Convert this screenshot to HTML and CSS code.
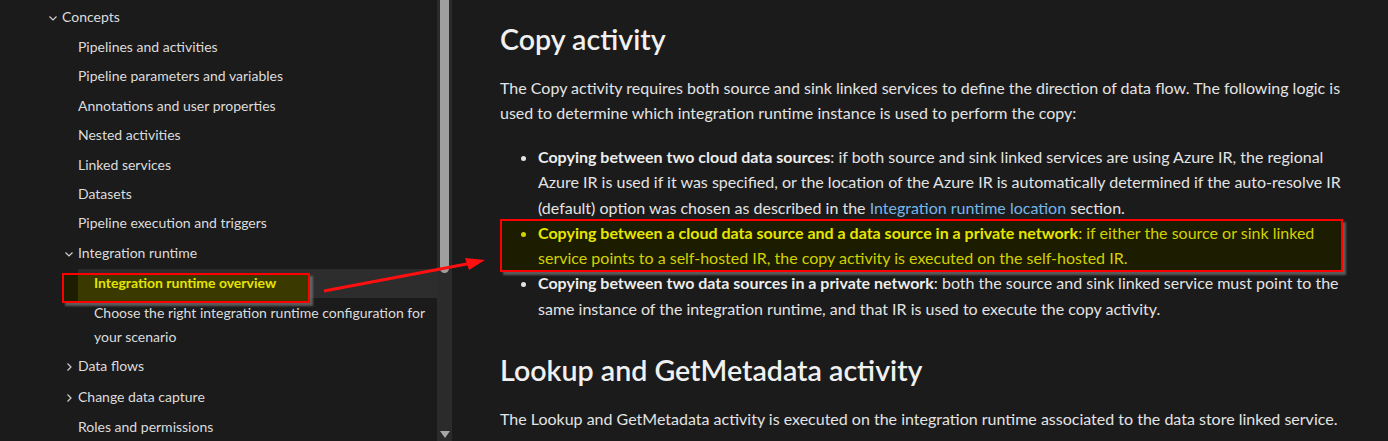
FILE: index.html
```html
<!DOCTYPE html>
<html lang="en">
<head>
<meta charset="utf-8">
<title>Copy activity</title>
<link rel="stylesheet" href="styles.css">
</head>
<body>
<div class="page">
  <nav class="toc">
    <ul class="toc-list">
      <li class="toc-item l1"><span class="chev"><svg width="10" height="10" viewBox="0 0 10 10"><polyline points="1.5,3.5 5,7 8.5,3.5" fill="none" stroke="#cfcfcf" stroke-width="1.2"/></svg></span>Concepts</li>
      <li class="toc-item l2">Pipelines and activities</li>
      <li class="toc-item l2">Pipeline parameters and variables</li>
      <li class="toc-item l2">Annotations and user properties</li>
      <li class="toc-item l2">Nested activities</li>
      <li class="toc-item l2">Linked services</li>
      <li class="toc-item l2">Datasets</li>
      <li class="toc-item l2">Pipeline execution and triggers</li>
      <li class="toc-item l2"><span class="chev"><svg width="10" height="10" viewBox="0 0 10 10"><polyline points="1.5,3.5 5,7 8.5,3.5" fill="none" stroke="#cfcfcf" stroke-width="1.2"/></svg></span>Integration runtime</li>
      <li class="toc-item l3 selected"><span class="toc-mark"></span>Integration runtime overview</li>
      <li class="toc-item l3">Choose the right integration runtime configuration for your scenario</li>
      <li class="toc-item l2"><span class="chev"><svg width="10" height="10" viewBox="0 0 10 10"><polyline points="3.5,1.5 7,5 3.5,8.5" fill="none" stroke="#cfcfcf" stroke-width="1.2"/></svg></span>Data flows</li>
      <li class="toc-item l2"><span class="chev"><svg width="10" height="10" viewBox="0 0 10 10"><polyline points="3.5,1.5 7,5 3.5,8.5" fill="none" stroke="#cfcfcf" stroke-width="1.2"/></svg></span>Change data capture</li>
      <li class="toc-item l2">Roles and permissions</li>
    </ul>
  </nav>
  <div class="scrollbar">
    <div class="thumb"></div>
    <div class="scroll-arrow"><svg width="10" height="8" viewBox="0 0 10 8"><polygon points="0,0 10,0 5,7" fill="#a8a8a8"/></svg></div>
  </div>
  <main class="content">
    <h2 class="heading">Copy activity</h2>
    <p class="para">The Copy activity requires both source and sink linked services to define the direction of data flow. The following logic is used to determine which integration runtime instance is used to perform the copy:</p>
    <ul class="bullets">
      <li><strong>Copying between two cloud data sources</strong>: if both source and sink linked services are using Azure IR, the regional Azure IR is used if it was specified, or the location of the Azure IR is automatically determined if the auto-resolve IR (default) option was chosen as described in the <a class="link" href="#">Integration runtime location</a> section.</li>
      <li class="marked"><strong>Copying between a cloud data source and a data source in a private network</strong>: if either the source or sink linked service points to a self-hosted IR, the copy activity is executed on the self-hosted IR.</li>
      <li><strong>Copying between two data sources in a private network</strong>: both the source and sink linked service must point to the same instance of the integration runtime, and that IR is used to execute the copy activity.</li>
    </ul>
    <h2 class="heading second">Lookup and GetMetadata activity</h2>
    <p class="para">The Lookup and GetMetadata activity is executed on the integration runtime associated to the data store linked service.</p>
  </main>
  <svg class="annot-arrow" width="1388" height="441" viewBox="0 0 1388 441">
    <line x1="324" y1="291" x2="472" y2="263" stroke="#ff0f0f" stroke-width="3"/>
    <polygon points="485,260 465,258 469,270" fill="#ff0f0f"/>
  </svg>
</div>
</body>
</html>
```
FILE: styles.css
```css
* { box-sizing: border-box; }
html, body { margin: 0; padding: 0; }
body {
  background: #1b1b1b;
  color: #e3e3e3;
  font-family: Lato, "Open Sans", sans-serif;
}
.page {
  position: relative;
  display: flex;
  width: 1388px;
  height: 441px;
  overflow: hidden;
}
.toc {
  width: 437px;
  flex: none;
  height: 441px;
  overflow: hidden;
}
.toc-list {
  list-style: none;
  margin: 0;
  padding: 2px 0 0 0;
}
.toc-item {
  font-size: 14px;
  line-height: 24.4px;
  padding: 2.5px 8px 2.5px 0;
  color: #dcdcdc;
}
.toc-item.l1 { padding-left: 62px; }
.toc-item.l2 { padding-left: 78px; }
.toc-item.l3 { padding-left: 94px; }
.chev {
  display: inline-block;
  width: 14px;
  margin-left: -14px;
  vertical-align: -1px;
}
.toc-item.selected {
  position: relative;
  z-index: 0;
  margin-left: 78px;
  padding-left: 16px;
  background: #2d2d2d;
  color: #e4e400;
  font-weight: 700;
}
.toc-mark {
  position: absolute;
  z-index: -1;
  left: -16px;
  top: 4px;
  width: 248px;
  height: 30px;
  border: 2px solid #ff0000;
  background: linear-gradient(to right, #1d1d00 0 14px, #3a3a00 14px);
  box-shadow: 3px 3px 2px rgba(120,120,120,0.7);
}
.scrollbar {
  width: 15px;
  flex: none;
  height: 441px;
  background: #2b2b2b;
  display: flex;
  flex-direction: column;
  align-items: center;
  justify-content: space-between;
}
.thumb {
  width: 9px;
  height: 273px;
  background: #9f9f9f;
  border-radius: 0 0 5px 5px;
}
.scroll-arrow {
  height: 10px;
  line-height: 0;
}
.content {
  flex: 1;
  padding: 0 36px 0 48px;
}
.heading {
  font-size: 28.6px;
  font-weight: 600;
  color: #f0f0f0;
  margin: 20px 0 0 0;
  line-height: 38px;
}
.heading.second { margin-top: 30px; }
.para {
  font-size: 16px;
  line-height: 25px;
  margin: 17px 0 0 0;
}
.bullets {
  font-size: 16px;
  line-height: 25.3px;
  margin: 19px 0 0 0;
  padding-left: 38px;
}
.bullets strong { font-weight: 700; color: #ececec; }
.link { color: #75b6e7; text-decoration: none; }
.marked {
  position: relative;
  z-index: 0;
  color: #d2d200;
}
.marked strong { color: #e6e600; }
.marked::before {
  content: "";
  position: absolute;
  z-index: -1;
  left: -38px;
  right: 9px;
  top: -1px;
  bottom: -2px;
  border: 2px solid #ff0000;
  background: #1c1c00;
  box-shadow: 3px 3px 2px rgba(120,120,120,0.7);
}
.annot-arrow {
  position: absolute;
  left: 0;
  top: 0;
  pointer-events: none;
}
```
